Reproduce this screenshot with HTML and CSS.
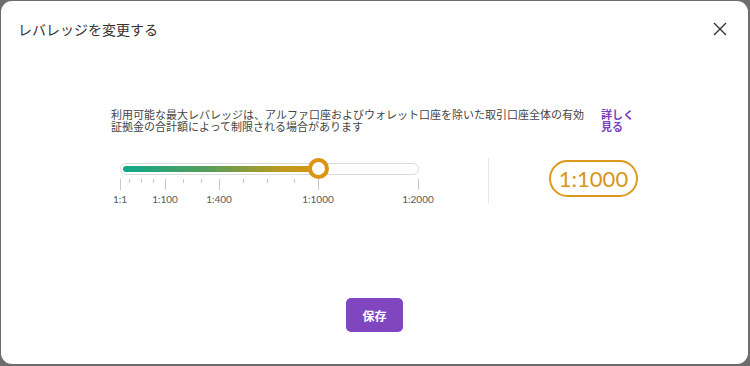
FILE: index.html
```html
<!DOCTYPE html>
<html lang="ja">
<head>
<meta charset="utf-8">
<link rel="stylesheet" href="styles.css">
</head>
<body>
<div class="modal">
  <header class="modal-header">
    <h1 class="title">レバレッジを変更する</h1>
    <button class="close" aria-label="閉じる">
      <svg width="14" height="14" viewBox="0 0 14 14"><path d="M1 1 L13 13 M13 1 L1 13" stroke="#333" stroke-width="1.4" fill="none"/></svg>
    </button>
  </header>
  <div class="content">
    <div class="info">
      <p class="desc">利用可能な最大レバレッジは、アルファ口座およびウォレット口座を除いた取引口座全体の有効証拠金の合計額によって制限される場合があります</p>
      <a class="more" href="#">詳しく見る</a>
    </div>
    <div class="slider-row">
      <div class="slider">
        <div class="track">
          <div class="fill" style="width:195px"></div>
        </div>
        <div class="thumb" style="left:198px"></div>
        <div class="ticks">
          <span class="tick major" style="left:0px"></span>
          <span class="tick" style="left:9px"></span>
          <span class="tick" style="left:21px"></span>
          <span class="tick" style="left:33px"></span>
          <span class="tick major" style="left:45px"></span>
          <span class="tick" style="left:63px"></span>
          <span class="tick" style="left:81px"></span>
          <span class="tick major" style="left:99px"></span>
          <span class="tick" style="left:123px"></span>
          <span class="tick" style="left:147px"></span>
          <span class="tick" style="left:174px"></span>
          <span class="tick major" style="left:198px"></span>
          <span class="tick major" style="left:298px"></span>
        </div>
        <div class="labels">
          <span class="lbl" style="left:0px">1:1</span>
          <span class="lbl" style="left:45px">1:100</span>
          <span class="lbl" style="left:99px">1:400</span>
          <span class="lbl" style="left:198px">1:1000</span>
          <span class="lbl" style="left:298px">1:2000</span>
        </div>
      </div>
      <div class="divider"></div>
      <div class="pill">1:1000</div>
    </div>
  </div>
  <div class="actions">
    <button class="save">保存</button>
  </div>
</div>
</body>
</html>
```

FILE: styles.css
```css
html, body {
  margin: 0;
  padding: 0;
}
body {
  background: #6d6d6d;
  width: 750px;
  height: 366px;
  overflow: hidden;
  font-family: "Noto Sans CJK JP", "Noto Sans", sans-serif;
}
.modal {
  margin: 1px 0 0 1px;
  width: 747px;
  height: 363px;
  background: #fff;
  border-radius: 11px;
  display: flex;
  flex-direction: column;
  box-sizing: border-box;
}
.modal-header {
  height: 56px;
  display: flex;
  align-items: flex-start;
  justify-content: space-between;
  padding: 18px 21px 0 17px;
  box-sizing: border-box;
}
.title {
  margin: 0;
  font-size: 14px;
  line-height: 20px;
  font-weight: 400;
  color: #333;
}
.close {
  border: 0;
  background: none;
  padding: 0;
  margin-top: 3px;
  width: 14px;
  height: 14px;
  display: flex;
}
.content {
  margin: 51px 0 0 110px;
  width: 527px;
}
.info {
  display: flex;
  align-items: flex-start;
}
.desc {
  margin: 0;
  width: 478px;
  font-size: 11px;
  line-height: 12px;
  color: #444;
}
.more {
  margin-left: 12px;
  width: 34px;
  font-size: 11px;
  line-height: 12px;
  font-weight: 700;
  color: #7b3fc0;
  text-decoration: none;
}
.slider-row {
  margin-top: 26px;
  display: flex;
  align-items: flex-start;
}
.slider {
  position: relative;
  margin-left: 9px;
  width: 299px;
  height: 45px;
}
.track {
  margin-top: 5px;
  height: 12px;
  border: 1px solid #dcdcdc;
  border-radius: 7px;
  box-sizing: border-box;
  padding: 2px;
}
.fill {
  height: 6px;
  border-radius: 3px;
  background: linear-gradient(90deg, #0ea88d 0%, #5a9e58 45%, #b99a22 80%, #d8970f 100%);
}
.thumb {
  position: absolute;
  top: 0;
  width: 21px;
  height: 21px;
  margin-left: -10.5px;
  box-sizing: border-box;
  border: 4px solid #dc9512;
  border-radius: 50%;
  background: #fff;
}
.ticks {
  position: relative;
  height: 12px;
  margin-top: 4px;
}
.tick {
  position: absolute;
  top: 0;
  width: 1px;
  height: 4px;
  background: #c8c8c8;
}
.tick.major {
  height: 11px;
}
.labels {
  position: relative;
  height: 12px;
  margin-top: 2px;
}
.lbl {
  position: absolute;
  top: 0;
  transform: translateX(-50%);
  font-family: Lato, "Noto Sans", sans-serif;
  font-size: 10px;
  line-height: 12px;
  color: #5a5a5a;
  white-space: nowrap;
}
.divider {
  margin-left: 69px;
  width: 1px;
  height: 45px;
  background: #e6e6e6;
}
.pill {
  margin-left: auto;
  margin-top: 2px;
  width: 89px;
  height: 37px;
  box-sizing: border-box;
  border: 2px solid #dc9a1c;
  border-radius: 19px;
  display: flex;
  align-items: center;
  justify-content: center;
  font-family: Lato, "Noto Sans", sans-serif;
  font-size: 22px;
  color: #d8951b;
}
.actions {
  margin-top: 95px;
  display: flex;
  justify-content: center;
}
.save {
  width: 57px;
  height: 34px;
  border: 0;
  border-radius: 5px;
  background: #8046c0;
  color: #fff;
  font-family: "Noto Sans CJK JP", sans-serif;
  font-size: 12px;
  font-weight: 700;
  padding: 0;
}
```
